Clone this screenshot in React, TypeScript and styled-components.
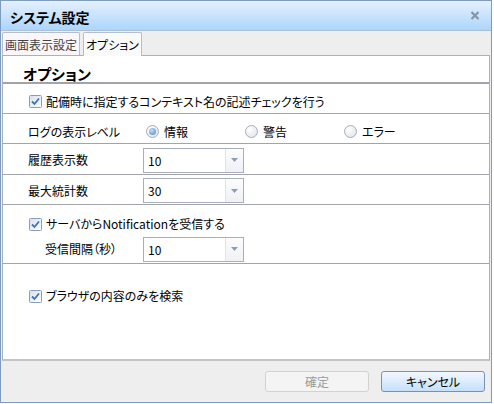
import styled, { createGlobalStyle } from 'styled-components'

const GlobalStyle = createGlobalStyle`
  html, body {
    margin: 0;
    padding: 0;
    background: #ffffff;
  }
  body {
    font-family: "Noto Sans CJK JP", "Liberation Sans", sans-serif;
    font-size: 12px;
    color: #000;
  }
`

const Window = styled.div`
  width: 492px;
  height: 403px;
  box-sizing: border-box;
  border: 1px solid #7d9cc0;
  background: #eeeeee;
  display: flex;
  flex-direction: column;
  font-feature-settings: 'palt';
`

const TitleBar = styled.div`
  height: 29px;
  flex: none;
  display: flex;
  align-items: center;
  justify-content: space-between;
  padding: 0 11px 0 9px;
  background: linear-gradient(to bottom, #e4f1fe 0%, #c9e3fd 50%, #acd5fb 100%);
  border-bottom: 1px solid #a9c0d8;
`

const Title = styled.div`
  font-size: 14px;
  font-weight: 700;
  line-height: 18px;
  margin-top: 2px;
`

const CloseIcon = () => (
  <svg width='10' height='9' viewBox='0 0 10 9'>
    <path d='M1.5 1 L8.5 8 M8.5 1 L1.5 8' stroke='#8694a8' strokeWidth='2.2' />
  </svg>
)

const TabBar = styled.div`
  height: 24px;
  flex: none;
  display: flex;
  align-items: flex-end;
  gap: 3px;
  padding-left: 1px;
`

const Tab = styled.div<{ $active?: boolean }>`
  height: 23px;
  box-sizing: border-box;
  padding: 0 2px;
  display: flex;
  align-items: center;
  font-size: 12px;
  color: ${p => (p.$active ? '#000' : '#444')};
  border: 1px solid #b4bfcc;
  border-bottom: none;
  border-radius: 2px 2px 0 0;
  background: ${p => (p.$active ? '#fafafa' : '#fbf6fa')};
  margin-bottom: ${p => (p.$active ? '-1px' : '0')};
  height: ${p => (p.$active ? '24px' : '23px')};
  position: relative;
  z-index: ${p => (p.$active ? 1 : 0)};
`

const Panel = styled.div`
  flex: 1;
  margin: 0 1px;
  background: #ffffff;
  border: 1px solid #a6b2c0;
  border-bottom: 2px solid #c4c4c8;
  display: flex;
  flex-direction: column;
`

const Heading = styled.div`
  height: 28px;
  box-sizing: border-box;
  padding: 8px 0 0 20px;
  font-size: 15px;
  font-weight: 700;
  line-height: 20px;
  border-bottom: 2px solid #a3a3ab;
`

const Row = styled.div<{ $h: number; $pt?: number; $pl?: number; $line?: boolean }>`
  height: ${p => p.$h}px;
  box-sizing: border-box;
  padding-top: ${p => p.$pt ?? 0}px;
  padding-left: ${p => p.$pl ?? 25}px;
  display: flex;
  align-items: center;
  border-bottom: ${p => (p.$line ? '1px solid #a3a3ab' : 'none')};
`

const Label = styled.div<{ $w: number }>`
  width: ${p => p.$w}px;
  flex: none;
  line-height: 16px;
`

const CheckLabel = styled.label`
  display: flex;
  align-items: center;
  gap: 4px;
  line-height: 16px;
`

const RadioGroup = styled.div`
  display: flex;
  margin-left: 3px;
`

const RadioOption = styled.label`
  width: 99px;
  display: flex;
  align-items: center;
  gap: 5px;
  line-height: 16px;
`

const Select = styled.div`
  width: 101px;
  height: 25px;
  box-sizing: border-box;
  border: 1px solid #a9afb9;
  display: flex;
  background: #fff;
`

const SelectValue = styled.div`
  flex: 1;
  padding-left: 4px;
  display: flex;
  align-items: center;
  font-size: 12px;
`

const SelectButton = styled.div`
  width: 17px;
  border-left: 1px solid #dfe3e8;
  background: linear-gradient(to bottom, #fcfcfd, #eff1f5);
  display: flex;
  align-items: center;
  justify-content: center;
`

const Spacer = styled.div<{ $h: number }>`
  height: ${p => p.$h}px;
`

const Footer = styled.div`
  height: 41px;
  flex: none;
  display: flex;
  align-items: center;
  justify-content: flex-end;
  gap: 12px;
  padding-right: 6px;
`

const Button = styled.div<{ $primary?: boolean }>`
  width: 104px;
  height: 21px;
  box-sizing: border-box;
  border-radius: 3px;
  display: flex;
  align-items: center;
  justify-content: center;
  font-size: 12px;
  border: 1px solid ${p => (p.$primary ? '#7592b8' : '#d2d2d2')};
  color: ${p => (p.$primary ? '#000' : '#9a9a9a')};
  background: ${p =>
    p.$primary
      ? 'linear-gradient(to bottom, #f1f8ff 0%, #dcecfd 50%, #c5dffa 100%)'
      : '#f4f4f4'};
`

const CheckBox = () => (
  <svg width='13' height='13' viewBox='0 0 13 13'>
    <defs>
      <linearGradient id='cbg' x1='0' y1='0' x2='1' y2='1'>
        <stop offset='0' stopColor='#d6e0ee' />
        <stop offset='1' stopColor='#ffffff' />
      </linearGradient>
    </defs>
    <rect x='0.5' y='0.5' width='12' height='12' rx='1' fill='url(#cbg)' stroke='#8c9db6' />
    <path d='M3 6.5 L5.5 9 L10 3.5' fill='none' stroke='#3f72b8' strokeWidth='1.8' />
  </svg>
)

const Radio = ({ on }: { on?: boolean }) => (
  <svg width='13' height='13' viewBox='0 0 13 13'>
    <defs>
      <radialGradient id='rbg' cx='0.35' cy='0.35' r='0.8'>
        <stop offset='0' stopColor='#ffffff' />
        <stop offset='1' stopColor='#dde3ea' />
      </radialGradient>
      <radialGradient id='rdot' cx='0.4' cy='0.35' r='0.7'>
        <stop offset='0' stopColor='#c8e0f8' />
        <stop offset='1' stopColor='#5b95d6' />
      </radialGradient>
    </defs>
    <circle cx='6.5' cy='6.5' r='6' fill='url(#rbg)' stroke='#a6aebb' />
    {on && <circle cx='6.5' cy='6.5' r='3.5' fill='url(#rdot)' />}
  </svg>
)

const Arrow = () => (
  <svg width='7' height='4' viewBox='0 0 7 4'>
    <path d='M0 0 H7 L3.5 4 Z' fill='#8e9cb8' />
  </svg>
)

const Dropdown = ({ value }: { value: string }) => (
  <Select>
    <SelectValue>{value}</SelectValue>
    <SelectButton>
      <Arrow />
    </SelectButton>
  </Select>
)

export default function App() {
  return (
    <>
      <GlobalStyle />
      <Window>
        <TitleBar>
          <Title>システム設定</Title>
          <CloseIcon />
        </TitleBar>
        <TabBar>
          <Tab>画面表示設定</Tab>
          <Tab $active>オプション</Tab>
        </TabBar>
        <Panel>
          <Heading>オプション</Heading>
          <Row $h={30} $pt={6} $pl={26} $line>
            <CheckLabel>
              <CheckBox />
              配備時に指定するコンテキスト名の記述チェックを行う
            </CheckLabel>
          </Row>
          <Row $h={30} $pt={6} $line>
            <Label $w={115}>ログの表示レベル</Label>
            <RadioGroup>
              <RadioOption>
                <Radio on />
                情報
              </RadioOption>
              <RadioOption>
                <Radio />
                警告
              </RadioOption>
              <RadioOption>
                <Radio />
                エラー
              </RadioOption>
            </RadioGroup>
          </Row>
          <Row $h={31} $pt={2} $line>
            <Label $w={115}>履歴表示数</Label>
            <Dropdown value='10' />
          </Row>
          <Row $h={30} $pt={2} $line>
            <Label $w={115}>最大統計数</Label>
            <Dropdown value='30' />
          </Row>
          <Row $h={30} $pt={8} $pl={26}>
            <CheckLabel>
              <CheckBox />
              サーバからNotificationを受信する
            </CheckLabel>
          </Row>
          <Row $h={29} $pl={42} $line>
            <Label $w={98}>受信間隔（秒）</Label>
            <Dropdown value='10' />
          </Row>
          <Spacer $h={18} />
          <Row $h={28} $pl={26}>
            <CheckLabel>
              <CheckBox />
              ブラウザの内容のみを検索
            </CheckLabel>
          </Row>
        </Panel>
        <Footer>
          <Button>確定</Button>
          <Button $primary>キャンセル</Button>
        </Footer>
      </Window>
    </>
  )
}
